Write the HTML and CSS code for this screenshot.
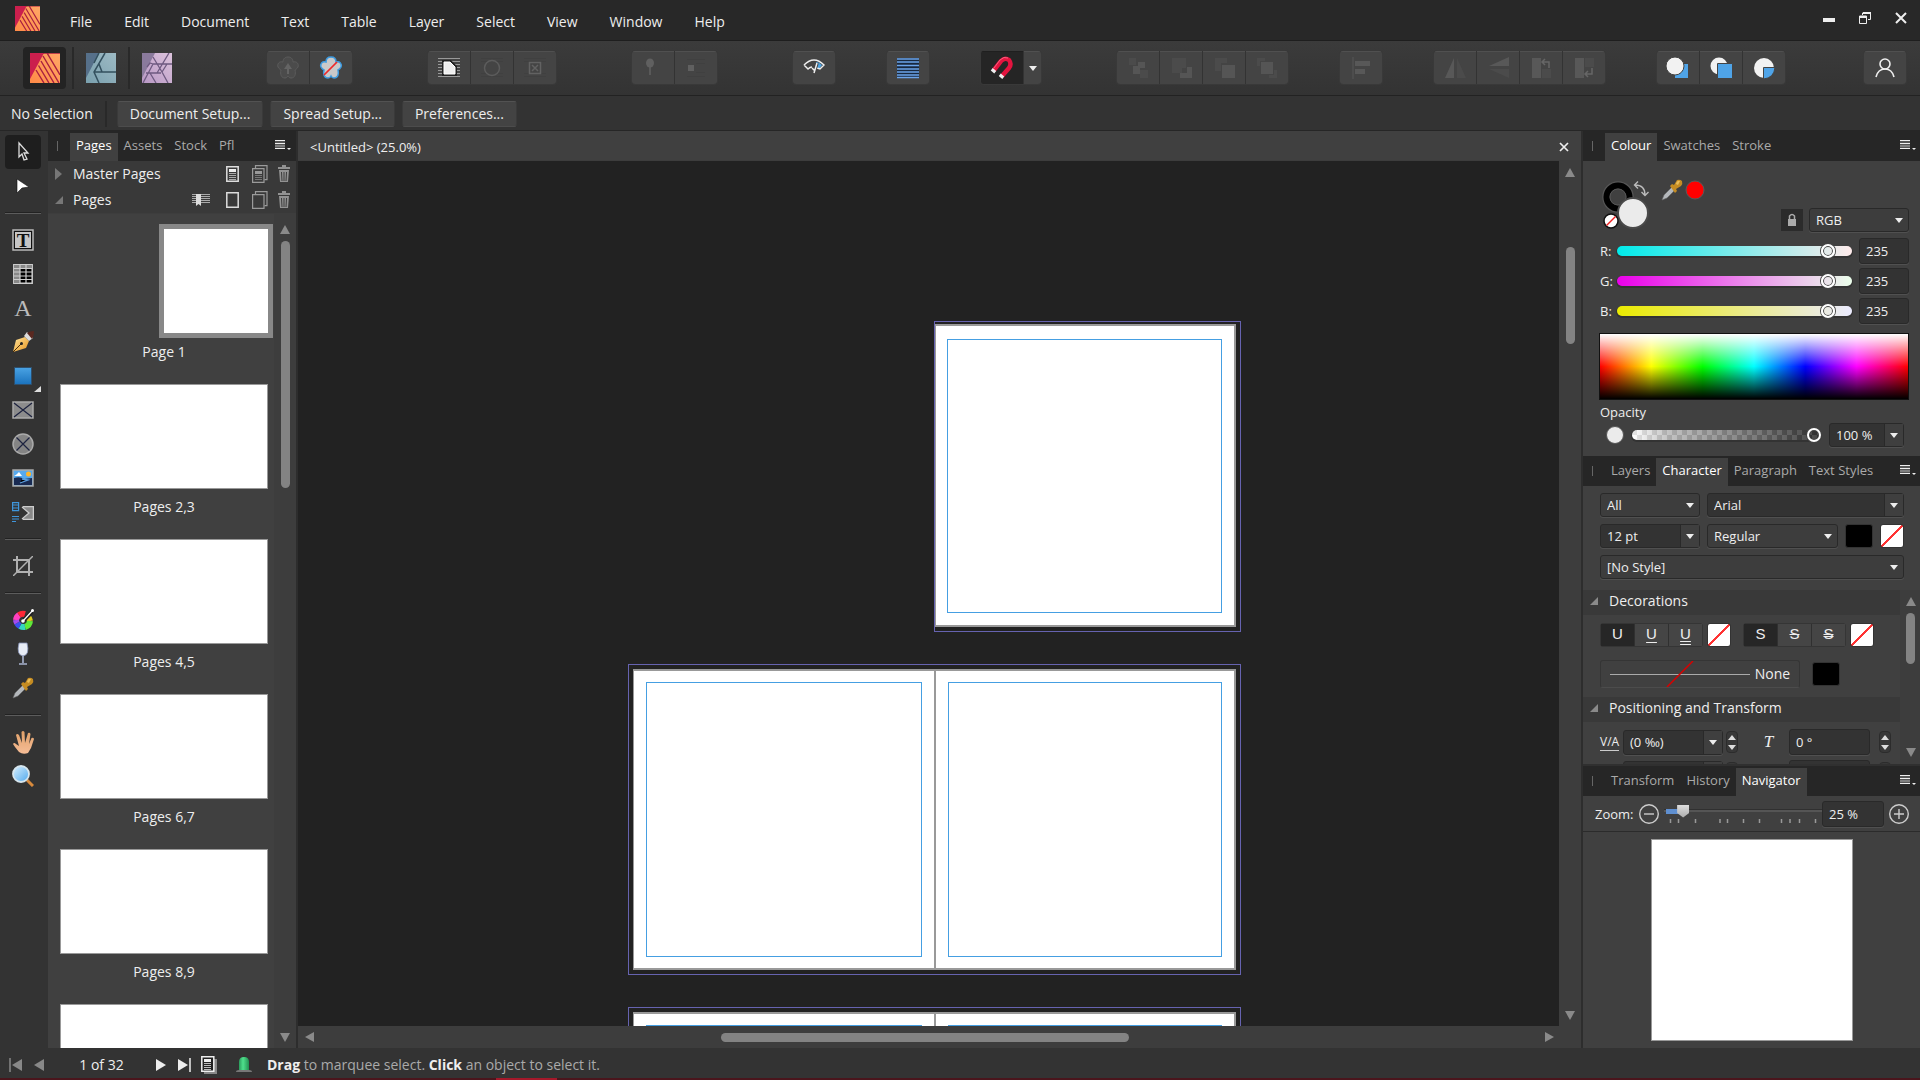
FILE: index.html
```html
<!DOCTYPE html>
<html lang="en">
<head>
<meta charset="utf-8">
<title>Untitled - Publisher</title>
<link rel="stylesheet" href="styles.css">
</head>
<body>
<svg class="defs" aria-hidden="true">
  <defs>
    <linearGradient id="gOrange" x1="0" y1="1" x2="1" y2="0"><stop offset="0" stop-color="#ff8a47"/><stop offset="1" stop-color="#ffa766"/></linearGradient>
    <linearGradient id="gTeal" x1="0" y1="1" x2="1" y2="0"><stop offset="0" stop-color="#7aa0ae"/><stop offset="1" stop-color="#9dbac4"/></linearGradient>
    <linearGradient id="gPurple" x1="0" y1="1" x2="1" y2="0"><stop offset="0" stop-color="#b898c4"/><stop offset="1" stop-color="#dcc3dc"/></linearGradient>
    <linearGradient id="gBlue" x1="0" y1="0" x2="0" y2="1"><stop offset="0" stop-color="#4aa3e4"/><stop offset="1" stop-color="#1a72bd"/></linearGradient>
    <linearGradient id="gGold" x1="0" y1="0" x2="1" y2="1"><stop offset="0" stop-color="#ffe6a0"/><stop offset="1" stop-color="#e8941c"/></linearGradient>
    <linearGradient id="gSkin" x1="0" y1="0" x2="0" y2="1"><stop offset="0" stop-color="#e0a068"/><stop offset="1" stop-color="#f6bd97"/></linearGradient>
    <linearGradient id="gGlass" x1="0" y1="0" x2="1" y2="1"><stop offset="0" stop-color="#d8f0ff"/><stop offset="1" stop-color="#4fa8ec"/></linearGradient>
    <linearGradient id="gBell" x1="0" y1="0" x2="1" y2="0"><stop offset="0" stop-color="#2a9c5c"/><stop offset=".4" stop-color="#4fe08c"/><stop offset="1" stop-color="#239052"/></linearGradient>
  </defs>
  <symbol id="publisher" viewBox="0 0 30 30"><path fill="url(#gOrange)" d="M0 0h30v30H0z"/><path fill="#cb1f4d" d="M0 0h14L0 26z"/><path stroke="#a81f40" stroke-width="1.4" d="M13 3l16 27M11 8l13 22M8.500 12.500L19 30M6 17l8 13M13 0l17 0M17 0l13 22"/></symbol>
  <symbol id="designer" viewBox="0 0 30 30"><path fill="url(#gTeal)" d="M0 0h30v30H0z"/><path fill="#56708a" d="M0 0h13L0 25z"/><path fill="none" stroke="#33505e" stroke-width="1.500" d="M13 0L8 10M19 0L8 19l5 11M8 19h22M13 11l3 8"/></symbol>
  <symbol id="photo" viewBox="0 0 30 30"><path fill="url(#gPurple)" d="M0 0h30v30H0z"/><path fill="#8a7a9c" d="M0 0h13L0 25z"/><path fill="none" stroke="#6e5a80" stroke-width="1.300" d="M11 4l9 15M27 0L15 20M5 14l3-4 3 1M4 20h15M18 11h12M20 19l5-8M11 11L1 30M8 20l6 10M20 19l6 11M11 11h7"/></symbol>
  <symbol id="menu" viewBox="0 0 17 12"><path fill="#555" d="M0 2h10v7H0z"/><path stroke="#eee" d="M0 1.500h10M0 9.500h10M0 4.500h10"/><path stroke="#aaa" d="M0 7h10"/><path fill="#eee" d="M12 9h4l-2 2z"/></symbol>
  <symbol id="trash" viewBox="0 0 12 18"><path fill="#929292" d="M4 0h4v2h4v2H0V2h4zM1 5h10l-1 12H2z"/><path stroke="#3a3a3a" d="M3.500 7l.5 9M6 7v9M8.500 7L8 16"/></symbol>
  <symbol id="dropper" viewBox="0 0 22 22"><path fill="#b4b8bc" stroke="#666" stroke-width=".6" d="M1 21l2-5 8-8 3 3-8 8z"/><path fill="#c58c22" d="M9 7l2-2 2 1 3-5q3-1 5 1 1 3-1 5l-5 3 1 2-2 2z"/><path fill="#e9bd59" d="M15 5q1-4 4-3l-2 4z"/></symbol>
  <symbol id="up" viewBox="0 0 10 10"><path fill="#8a8a8a" d="M5 0l5 9H0z"/></symbol>
  <symbol id="down" viewBox="0 0 10 10"><path fill="#8a8a8a" d="M0 1h10l-5 9z"/></symbol>
  <symbol id="left" viewBox="0 0 10 10"><path fill="#8a8a8a" d="M9 0v10L0 5z"/></symbol>
  <symbol id="right" viewBox="0 0 10 10"><path fill="#8a8a8a" d="M1 0v10l9-5z"/></symbol>
</svg>

<header class="titlebar">
  <svg class="app-logo"><use href="#publisher"/></svg>
  <nav class="menus">
    <button>File</button><button>Edit</button><button>Document</button><button>Text</button><button>Table</button><button>Layer</button><button>Select</button><button>View</button><button>Window</button><button>Help</button>
  </nav>
  <div class="window-buttons">
    <button aria-label="Minimise"><svg width="12" height="12"><path fill="#eee" d="M0 6h12v4H0z"/></svg></button>
    <button aria-label="Restore"><svg width="12" height="12" fill="none" stroke="#eee"><path stroke-width="2" d="M4 1h8M1 5h7"/><path d="M3.500 3V1h8v6.500H9M.5 4v7.500h7V4z"/></svg></button>
    <button aria-label="Close"><svg width="12" height="12"><path stroke="#eee" stroke-width="2" d="M1 1l10 10M11 1L1 11"/></svg></button>
  </div>
</header>

<div class="toolbar">
  <div class="personas">
    <button class="persona on" aria-label="Publisher"><svg width="30" height="30"><use href="#publisher"/></svg></button>
    <button class="persona" aria-label="Designer"><svg width="30" height="30"><use href="#designer"/></svg></button>
    <button class="persona" aria-label="Photo"><svg width="30" height="30"><use href="#photo"/></svg></button>
  </div>
  <div class="group first">
    <button aria-label="Synchronise defaults"><svg width="24" height="24"><path fill="#4b4b4b" stroke="#5c5c5c" d="M12 1c4 0 5 3 5 5 4-1 6 2 5 5-1 2-3 3-3 3 1 4 0 8-4 8-2 0-3-2-3-2s-1 2-3 2c-4 0-5-4-4-8 0 0-2-1-3-3-1-3 1-6 5-5 0-2 1-5 5-5z"/><path fill="#646464" d="M12 7l4 6h-3v5h-2v-5H8z"/></svg></button>
    <button aria-label="Revert defaults"><svg width="24" height="24"><path fill="#c9c9c9" stroke="#3d9be0" stroke-width="1.500" d="M12 1c4 0 5 3 5 5 4-1 6 2 5 5-1 2-3 3-3 3 1 4 0 8-4 8-2 0-3-2-3-2s-1 2-3 2c-4 0-5-4-4-8 0 0-2-1-3-3-1-3 1-6 5-5 0-2 1-5 5-5z"/><path stroke="#f02828" stroke-width="1.700" d="M5 19L18 6"/></svg></button>
  </div>
  <div class="group wide">
    <button aria-label="Show wrap outline"><svg width="24" height="24"><path stroke="#999" stroke-width="1" d="M1 2.500h22M1 5.500h22M1 8.500h22M1 11.500h22M1 14.500h22M1 17.500h22M1 20.500h22"/><path fill="#eee" stroke="#222" stroke-width="4" d="M7 6h6l5 5v7H7z"/><path fill="#eee" stroke="#fff" d="M7 6h6l5 5v7H7z"/></svg></button>
    <button aria-label="Wrap"><svg width="24" height="24" fill="none"><path stroke="#404040" d="M1 2.500h22M1 5.500h22M1 17.500h22M1 20.500h22"/><ellipse cx="12" cy="12" rx="7.500" ry="7.500" fill="#444" stroke="#5c5c5c" stroke-width="1.500"/></svg></button>
    <button aria-label="No wrap"><svg width="24" height="24"><path stroke="#404040" d="M1 2.500h22M1 5.500h22M1 17.500h22M1 20.500h22"/><path fill="#444" stroke="#626262" stroke-width="1.500" d="M6.500 6.500h11v11h-11zM9 9l6 6M15 9l-6 6"/></svg></button>
  </div>
  <div class="group wide">
    <button aria-label="Pin to text"><svg width="24" height="24"><ellipse cx="9" cy="7" rx="4" ry="4.500" fill="#606060"/><path stroke="#606060" stroke-width="1.500" d="M9 10v9"/></svg></button>
    <button aria-label="Pin inline"><svg width="24" height="24"><path fill="#606060" d="M4 9h6v6H4z"/><path stroke="#404040" d="M3 3.500h18M12 7.500h9M12 16.500h9M3 20.500h18"/></svg></button>
  </div>
  <div class="group wide">
    <button aria-label="Preview mode"><svg width="22" height="20" fill="none" stroke="#eee" stroke-width="1.500"><path fill="#4aa3e4" stroke="none" d="M13 4q3 0 6 3l-3 4q-2-1-3-1z"/><path d="M1 7q10-10 20 0l-4 4-3-1M9 9q-2 0-4 2L1 7"/><path stroke="#444" stroke-width="3.500" d="M11 15l3-10"/><path d="M11 15l3-10M9 10l3 3"/></svg></button>
  </div>
  <div class="group">
    <button aria-label="Baseline grid"><svg width="22" height="22"><path fill="#18283e" d="M0 1h22v20H0z"/><path stroke="#6ba4ea" stroke-width="1.400" d="M0 2h22M0 5h22M0 8.500h22M0 12h22M0 15h22M0 18h22M0 20.500h22"/></svg></button>
  </div>
  <div class="group">
    <button class="on" aria-label="Snapping"><svg width="24" height="24" fill="none"><path stroke="#e3143f" stroke-width="4.500" d="M4 14l7-9q4-4 8-1 3 4 0 8l-7 8"/><path stroke="#f76080" d="M4 12l6-8q4-4 8-2"/><path stroke="#eee" stroke-width="4.500" d="M4.500 13.500l-2 2.500M12.500 19l-2 2.500"/></svg></button>
    <button class="narrow" aria-label="Snapping options"><svg width="8" height="5"><path fill="#eee" d="M0 0h8L4 5z"/></svg></button>
  </div>
  <div class="group wide dim">
    <button aria-label="Back"><svg width="24" height="24"><path fill="#4b4b4b" d="M3 2h7v7H3zM14 14h8v8h-8z"/><path fill="#555" d="M12 6h7v6h-5v6H7v-8h5z"/></svg></button>
    <button aria-label="Back one"><svg width="24" height="24"><path fill="#4b4b4b" d="M3 2h14v10h-4v5H3z"/><path fill="#555" d="M18 11h5v11H11v-5h7z"/></svg></button>
    <button aria-label="Forward one"><svg width="24" height="24"><path fill="#4b4b4b" d="M3 2h12v5H9v8H3z"/><path fill="#555" d="M10 9h13v13H10z"/></svg></button>
    <button aria-label="Front"><svg width="24" height="24"><path fill="#4b4b4b" d="M2 2h8v3H5v5H2zM19 14h3v8h-8v-3h5z"/><path fill="#555" d="M6 6h12v12H6z"/></svg></button>
  </div>
  <div class="group">
    <button aria-label="Alignment"><svg width="24" height="24"><path fill="#4d4d4d" d="M3 1h2v22H3z"/><path fill="#585858" d="M6 5h15v5H6zM6 13h10v5H6z"/></svg></button>
  </div>
  <div class="group">
    <button aria-label="Flip horizontal"><svg width="24" height="24"><path fill="#585858" d="M11 2v20H2z"/><path fill="#4b4b4b" d="M14 2v20h9z"/></svg></button>
    <button aria-label="Flip vertical"><svg width="24" height="24"><path fill="#585858" d="M3 10h20V1z"/><path fill="#4b4b4b" d="M3 13h20v9z"/></svg></button>
    <button aria-label="Rotate left"><svg width="24" height="24"><path fill="#585858" d="M3 2h9v20H3z"/><path fill="#4b4b4b" d="M13 13h9v9h-9z"/><path fill="none" stroke="#666" stroke-width="1.500" d="M20 12V6h-6M16 3l-3 3 3 3"/></svg></button>
    <button aria-label="Rotate right"><svg width="24" height="24"><path fill="#585858" d="M3 2h9v20H3z"/><path fill="#4b4b4b" d="M13 2h9v9h-9z"/><path fill="none" stroke="#666" stroke-width="1.500" d="M20 12v6h-6M16 15l-3 3 3 3"/></svg></button>
  </div>
  <div class="group">
    <button aria-label="Insert behind"><svg width="24" height="24"><path fill="#4fa4e8" d="M9 8h13v14H9z"/><circle cx="9" cy="10" r="9" fill="#f2f2f2" stroke="#444"/></svg></button>
    <button aria-label="Insert on top"><svg width="24" height="24"><circle cx="10" cy="10" r="8.500" fill="#f2f2f2"/><path fill="#4fa4e8" stroke="#444" d="M8.500 7.500h15v15h-15z"/></svg></button>
    <button aria-label="Insert inside"><svg width="24" height="24"><circle cx="12" cy="12" r="10" fill="#f2f2f2"/><path fill="#4fa4e8" stroke="#444" d="M11.500 23V11.500H23Q22 22 11.500 23z"/></svg></button>
  </div>
  <div class="group account">
    <button aria-label="Account"><svg width="22" height="22" fill="none" stroke="#eee" stroke-width="1.600"><circle cx="11" cy="7" r="5"/><path d="M2 20q2-8 9-8t9 8"/></svg></button>
  </div>
</div>

<div class="context">
  <span class="selection">No Selection</span>
  <button>Document Setup...</button><button>Spread Setup...</button><button>Preferences...</button>
</div>

<main class="work">
  <aside class="tools">
    <button class="on" aria-label="Move"><svg width="24" height="24"><path fill="#222" stroke="#ddd" stroke-width="1.300" d="M8 3l9 10h-4l3 6-3 1-2-6-3 3z"/></svg></button>
    <button aria-label="Node"><svg width="24" height="24"><path fill="#fff" stroke="#111" stroke-width=".6" d="M6 5l12 8-7 1-5 5z"/></svg></button>
    <hr>
    <button aria-label="Frame text"><svg class="framed" width="22" height="22"><path fill="#111" stroke="#bbb" stroke-width="1.500" d="M1 1h20v20H1z"/><path fill="#c6c6c6" d="M3 3h16v16H3z"/><text x="11" y="18" text-anchor="middle" class="frame-t">T</text></svg></button>
    <button aria-label="Table"><svg width="20" height="20"><path fill="#000" stroke="#ccc" stroke-width="1.500" d="M.8.8h18.400v18.400H.8z"/><path fill="#888" d="M1 1h18v3H1zM1 1h6v18H1z"/><path stroke="#ccc" stroke-width="1.200" d="M1 4.500h18M1 8h18M1 12h18M1 15.500h18M7 1v18M13 1v18"/></svg></button>
    <button aria-label="Artistic text"><span class="glyph-a">A</span></button>
    <button aria-label="Pen"><svg width="24" height="24"><path fill="url(#gGold)" d="M2 22l3-12 9-3 4 4-3 7z"/><path stroke="#4a2c08" d="M2 22l8-8"/><circle cx="10.500" cy="13.500" r="1.500" fill="#222"/><path fill="#ddd" d="M13 6l3-4 6 6-4 3z"/><path fill="#5a2820" d="M16 3q3-2 7-2 0 5-2 8z"/></svg></button>
    <button class="flyout" aria-label="Rectangle"><svg width="20" height="20"><path fill="url(#gBlue)" stroke="#2f4f6c" d="M1.500 1.500h17v17h-17z"/></svg></button>
    <button aria-label="Picture frame rectangle"><svg width="22" height="18"><path fill="#8c8c8c" stroke="#aaa" stroke-width="1.500" d="M1 1h20v16H1z"/><path stroke="#1d2340" stroke-width="1.200" d="M2 2l18 14M20 2L2 16"/></svg></button>
    <button aria-label="Picture frame ellipse"><svg width="22" height="22"><circle cx="11" cy="11" r="10" fill="#848484" stroke="#aaa" stroke-width="1.500"/><path stroke="#1d2340" stroke-width="1.200" d="M4.500 4.500l13 13M17.500 4.500l-13 13"/></svg></button>
    <button aria-label="Place image"><svg width="22" height="18"><path fill="#56a9ee" stroke="#aaa" stroke-width="1.500" d="M1 1h20v16H1z"/><path fill="#fff" d="M2 7q2-1 3-2t2-2l3 4z"/><circle cx="16.500" cy="5" r="2.500" fill="#ffb52a"/><path fill="#182a52" d="M2 9q6-2 10 1l8-1v7H2z"/><path stroke="#5b9fe0" stroke-width="1.300" d="M10 10l6 1-8 3"/></svg></button>
    <button aria-label="Data merge"><svg width="22" height="20"><path fill="none" stroke="#3f96dc" stroke-width="1.200" d="M.6.6h6v8h-6zM1 3h5M1 6h5M0 14.500h7M0 17h7M0 19.500h4"/><path fill="#888" d="M10 4h12v14H10l7-7z"/><path fill="none" stroke="#ccc" stroke-width="1.300" d="M22 4.700H11M22 17.300H11M10 5l7 6-7 6M21.400 4v14"/></svg></button>
    <hr>
    <button aria-label="Crop"><svg width="20" height="20" fill="none" stroke="#b0b0b0" stroke-width="2"><path d="M4 0v16h16M0 4h16v16"/><path stroke-width="1.500" d="M0 20L20 0"/></svg></button>
    <hr>
    <button aria-label="Fill"><svg width="24" height="24" fill="none" stroke-width="6"><path stroke="#ff40c0" d="M5 12A7 7 0 0 1 8 7"/><path stroke="#ff2836" d="M8 7a7 7 0 0 1 6-1"/><path stroke="#dccb20" d="M17 9a7 7 0 0 1 2 4"/><path stroke="#60e838" d="M19 13a7 7 0 0 1-5 6"/><path stroke="#34d6c0" d="M14 19a7 7 0 0 1-5-1"/><path stroke="#3a50ee" d="M9 18a7 7 0 0 1-3-3"/><path stroke="#a34cf0" d="M6 15a7 7 0 0 1-1-3"/><path stroke="#222" stroke-width="4" d="M12 13l9-9"/><path stroke="#fff" stroke-width="1.200" d="M12 13L22 2"/><circle cx="12" cy="13" r="1.800" fill="#fff"/><circle cx="21.500" cy="2.500" r="1.500" fill="#fff"/></svg></button>
    <button aria-label="Transparency"><svg width="16" height="24"><path fill="#e8edf6" stroke="#8592b6" stroke-width=".8" d="M4 1h8q3 12-4 13Q1 13 4 1z"/><path fill="none" stroke="#a9b4d0" stroke-width="1.600" d="M8 14v7M4 22h8"/></svg></button>
    <button aria-label="Colour picker"><svg width="22" height="22"><use href="#dropper"/></svg></button>
    <hr>
    <button aria-label="View"><svg width="22" height="24"><path fill="url(#gSkin)" d="M7 22L3 17 1 14q1-2 3 0l3 2L4 5q1-2 3 0l3 8L9.500 2q1.500-2 3 0l.5 11L16 3q2-1 2.500 1L17 14l2.500-6q2-1 2.500 1l-3 9-3 5q-5 2-9-1z"/></svg></button>
    <button aria-label="Zoom"><svg width="22" height="22"><path stroke="#d88a3c" stroke-width="3" d="M15 15l6 6"/><circle cx="9" cy="9" r="8" fill="url(#gGlass)" stroke="#d7e6ee" stroke-width="1.800"/></svg></button>
  </aside>

  <section class="pages panel">
    <div class="tabs"><button class="on">Pages</button><button>Assets</button><button>Stock</button><button>Pfl</button><button class="tab-menu" aria-label="Panel menu"><svg width="17" height="12"><use href="#menu"/></svg></button></div>
    <div class="tree">
      <div class="tree-row"><svg width="7" height="12"><path fill="#777" d="M0 0l7 6-7 6z"/></svg><span>Master Pages</span>
        <button aria-label="Add master"><svg width="13" height="16"><path fill="#3a3a3a" stroke="#ddd" stroke-width="1.500" d="M.8.8h11.400v14.400H.8z"/><path fill="#eee" d="M3 3h7v3H3z"/><path stroke="#aaa" d="M3 7.500h7M3 9.500h7M3 11.500h7M3 13.500h7"/></svg></button>
        <button class="dup" aria-label="Duplicate master"><svg width="16" height="18"><path fill="none" stroke="#9a9a9a" stroke-width="1.200" d="M3.500 3V.6h11.500v14h-2.500"/><path fill="#3a3a3a" stroke="#9a9a9a" stroke-width="1.200" d="M.6 3.600h11.400v13.800H.6z"/><path fill="#999" d="M3 6h7v3H3z"/><path stroke="#777" d="M3 10.500h7M3 12.500h7M3 14.500h7"/></svg></button>
        <button aria-label="Delete master"><svg width="12" height="18"><use href="#trash"/></svg></button></div>
      <div class="tree-row"><svg width="8" height="8"><path fill="#777" d="M8 0v8H0z"/></svg><span>Pages</span>
        <button class="marker" aria-label="Sections"><svg width="18" height="14"><path stroke="#aaa" d="M0 1.500h18M0 3.500h18M0 5.500h18M0 7.500h18M0 9.500h18"/><path fill="#ddd" d="M4 1h5v12l-2.500-2L4 13z"/></svg></button>
        <button aria-label="Add page"><svg width="13" height="16"><path fill="#3a3a3a" stroke="#ddd" stroke-width="1.500" d="M.8.8h11.400v14.400H.8z"/></svg></button>
        <button class="dup" aria-label="Duplicate page"><svg width="16" height="18"><path fill="none" stroke="#9a9a9a" stroke-width="1.200" d="M3.500 3V.6h11.500v14h-2.500"/><path fill="#3a3a3a" stroke="#9a9a9a" stroke-width="1.200" d="M.6 3.600h11.400v13.800H.6z"/></svg></button>
        <button aria-label="Delete page"><svg width="12" height="18"><use href="#trash"/></svg></button></div>
    </div>
    <div class="thumbs">
      <div class="thumb-list">
        <figure class="single"><div class="thumb"></div><figcaption>Page 1</figcaption></figure>
        <figure><div class="thumb"></div><figcaption>Pages 2,3</figcaption></figure>
        <figure><div class="thumb"></div><figcaption>Pages 4,5</figcaption></figure>
        <figure><div class="thumb"></div><figcaption>Pages 6,7</figcaption></figure>
        <figure><div class="thumb"></div><figcaption>Pages 8,9</figcaption></figure>
        <figure><div class="thumb"></div></figure>
      </div>
      <div class="vbar"><svg width="10" height="10"><use href="#up"/></svg><div class="rail"><div class="bar bar-pages"></div></div><svg width="10" height="10"><use href="#down"/></svg></div>
    </div>
  </section>

  <section class="document">
    <div class="doc-tab"><span>&lt;Untitled&gt; (25.0%)</span><button aria-label="Close document"><svg width="10" height="10"><path stroke="#eee" stroke-width="1.700" d="M1 1l8 8M9 1L1 9"/></svg></button></div>
    <div class="stage">
      <div class="canvas">
        <div class="spread solo"><div class="page"><div class="margins"></div></div></div>
        <div class="spread second"><div class="page"><div class="margins"></div></div><div class="page"><div class="margins"></div></div></div>
        <div class="spread third"><div class="page"><div class="margins"></div></div><div class="page"><div class="margins"></div></div></div>
      </div>
      <div class="vbar"><svg width="10" height="10"><use href="#up"/></svg><div class="rail"><div class="bar bar-doc"></div></div><svg width="10" height="10"><use href="#down"/></svg></div>
      <div class="hbar"><svg width="10" height="10"><use href="#left"/></svg><div class="rail"><div class="bar bar-h"></div></div><svg width="10" height="10"><use href="#right"/></svg></div>
    </div>
  </section>

  <aside class="studio">
    <section class="panel">
      <div class="tabs"><button class="on">Colour</button><button>Swatches</button><button>Stroke</button><button class="tab-menu" aria-label="Panel menu"><svg width="17" height="12"><use href="#menu"/></svg></button></div>
      <div class="colour">
        <div class="wells">
          <svg class="well-art" width="110" height="54" fill="none">
            <circle cx="18" cy="19" r="15" stroke="#555" stroke-width="1.500"/><circle cx="18" cy="19" r="11.500" stroke="#000" stroke-width="6"/><circle cx="18" cy="19" r="8" stroke="#555"/>
            <circle cx="33" cy="35" r="15" fill="#ebebeb" stroke="#4a4a4a" stroke-width="2"/>
            <circle cx="11" cy="43" r="7" fill="#fff" stroke="#111" stroke-width="1.500"/><path stroke="#f02020" stroke-width="1.500" d="M6.500 47.500l9-9"/>
            <path stroke="#bbb" stroke-width="1.400" d="M35 7q10 0 10 10M38 3.500L34.500 7l3.500 3.500M41.500 14L45 17.500l3.500-3.500"/>
            <use href="#dropper" x="61" y="1" width="22" height="22"/>
            <circle cx="95" cy="12" r="9" fill="#f00" stroke="#5a5a5a"/>
          </svg>
          <button class="lock" aria-label="Lock colour"><svg width="10" height="14"><path fill="#aaa" d="M1 6h8v7H1z"/><path fill="none" stroke="#aaa" stroke-width="1.500" d="M2.500 6V3q2.500-3 5 0v3"/></svg></button>
          <div class="pick mode"><select aria-label="Colour model"><option>RGB</option></select></div>
        </div>
        <div class="channel"><label for="r">R:</label><input class="slide red" id="r" type="range" min="0" max="255" value="235"><input class="field" aria-label="Red" value="235"></div>
        <div class="channel"><label for="g">G:</label><input class="slide green" id="g" type="range" min="0" max="255" value="235"><input class="field" aria-label="Green" value="235"></div>
        <div class="channel"><label for="b">B:</label><input class="slide blue" id="b" type="range" min="0" max="255" value="235"><input class="field" aria-label="Blue" value="235"></div>
        <div class="spectrum"></div>
        <label class="opacity-label" for="op">Opacity</label>
        <div class="opacity"><i class="dot"></i><input class="slide alpha" id="op" type="range" value="100"><div class="combo percent"><input aria-label="Opacity value" value="100 %"><button aria-label="Open"></button></div></div>
      </div>
    </section>

    <section class="panel character">
      <div class="tabs"><button>Layers</button><button class="on">Character</button><button>Paragraph</button><button>Text Styles</button><button class="tab-menu" aria-label="Panel menu"><svg width="17" height="12"><use href="#menu"/></svg></button></div>
      <div class="fonts">
        <div class="line"><div class="pick w100"><select aria-label="Font filter"><option>All</option></select></div><div class="combo grow"><input aria-label="Font family" value="Arial"><button aria-label="Open"></button></div></div>
        <div class="line"><div class="combo w100"><input aria-label="Font size" value="12 pt"><button aria-label="Open"></button></div><div class="pick grow"><select aria-label="Font style"><option>Regular</option></select></div><button class="swatch black" aria-label="Text colour"></button><button class="swatch none" aria-label="Highlight colour"></button></div>
        <div class="line"><div class="pick grow"><select aria-label="Character style"><option>[No Style]</option></select></div></div>
      </div>
      <div class="scroller">
        <div class="sections">
          <h2><svg width="8" height="8"><path fill="#8a8a8a" d="M8 0v8H0z"/></svg>Decorations</h2>
          <div class="deco">
            <div class="triple"><button class="on">U</button><button class="under">U</button><button class="under2">U</button></div><button class="swatch none" aria-label="Underline colour"></button>
            <div class="triple last"><button class="on">S</button><button class="strike">S</button><button class="strike2">S</button></div><button class="swatch none" aria-label="Strikethrough colour"></button>
          </div>
          <div class="outline"><button class="stroke-box"><svg width="140" height="26"><path stroke="#aaa" d="M0 13.500h140"/><path stroke="#d80000" stroke-width="1.500" d="M57 26L83 0"/></svg>None</button><button class="swatch black" aria-label="Stroke colour"></button></div>
          <h2><svg width="8" height="8"><path fill="#8a8a8a" d="M8 0v8H0z"/></svg>Positioning and Transform</h2>
          <div class="position">
            <span class="tracking">V/A</span>
            <div class="combo w100"><input aria-label="Tracking" value="(0 ‰)"><button aria-label="Open"></button></div><button class="spin" aria-label="Step tracking"></button>
            <span class="shear">T</span><input class="field deg" aria-label="Shear" value="0 °"><button class="spin far" aria-label="Step shear"></button>
          </div>
          <div class="position next"><i></i><div class="combo w100"><input aria-label="Kerning"><button aria-label="Open"></button></div><button class="spin" aria-label="Step kerning"></button><span class="shear"></span><input class="field deg" aria-label="Scale"><button class="spin far" aria-label="Step scale"></button></div>
        </div>
        <div class="vbar"><svg width="10" height="10"><use href="#up"/></svg><div class="rail"><div class="bar bar-char"></div></div><svg width="10" height="10"><use href="#down"/></svg></div>
      </div>
    </section>

    <section class="panel navigator">
      <div class="tabs"><button>Transform</button><button>History</button><button class="on">Navigator</button><button class="tab-menu" aria-label="Panel menu"><svg width="17" height="12"><use href="#menu"/></svg></button></div>
      <div class="zoom-row"><label for="zoom">Zoom:</label><button class="round" aria-label="Zoom out"><svg width="20" height="20" fill="none" stroke="#ccc" stroke-width="1.400"><circle cx="10" cy="10" r="9.300"/><path d="M5 10h10"/></svg></button>
        <div class="zoom-slide"><input id="zoom" type="range" value="9"><svg width="158" height="4"><path stroke="#999" stroke-width="1.500" d="M6.500 0v4M14.500 0v4M31.500 0v4M56 0v4M63.500 0v4M79.500 0v4M95.500 0v4M117.500 0v4M126 0v4M135.500 0v4M151.500 0v4"/></svg></div>
        <input class="field zoom-field" aria-label="Zoom value" value="25 %"><button class="round" aria-label="Zoom in"><svg width="20" height="20" fill="none" stroke="#ccc" stroke-width="1.400"><circle cx="10" cy="10" r="9.300"/><path d="M5 10h10M10 5v10"/></svg></button></div>
      <div class="preview"><div class="preview-page"></div></div>
    </section>
  </aside>
</main>

<footer class="status">
  <button aria-label="First page"><svg width="14" height="14"><path stroke="#888" stroke-width="1.500" d="M1 0v14"/><path fill="#888" d="M13 1v12L3 7z"/></svg></button>
  <button aria-label="Previous page"><svg width="12" height="14"><path fill="#888" d="M11 1v12L1 7z"/></svg></button>
  <button class="count">1 of 32</button>
  <button aria-label="Next page"><svg width="12" height="14"><path fill="#eee" d="M1 1v12l10-6z"/></svg></button>
  <button aria-label="Last page"><svg width="14" height="14"><path stroke="#eee" stroke-width="1.500" d="M13 0v14"/><path fill="#eee" d="M1 1v12l10-6z"/></svg></button>
  <button aria-label="Page list"><svg width="16" height="18"><path fill="#888" d="M3 3h13v15H3z"/><path fill="#222" stroke="#eee" stroke-width="1.500" d="M.8.800h12v14.500H.8z"/><path fill="#eee" d="M3 3h7v3H3z"/><path stroke="#bbb" d="M3 7.500h7M3 9.500h7M3 11.500h7M3 13.500h7"/></svg></button>
  <button class="bell" aria-label="Preflight"><svg width="16" height="16"><path fill="url(#gBell)" d="M3 13V5q0-5 5-5t5 5v8z"/><path fill="#777" d="M0 15q0-2 3-2h10q3 0 3 2z"/></svg></button>
  <p><b>Drag</b> to marquee select. <b>Click</b> an object to select it.</p>
</footer>
<div class="taskbar"><i></i></div>
</body>
</html>
```
FILE: styles.css
```css
* { box-sizing: border-box; }
body {
  margin: 0;
  height: 100vh;
  overflow: hidden;
  display: grid;
  grid-template-rows: 41px 55px 35px minmax(0, 1fr) 30px 2px;
  background: #333;
  color: #eee;
  font: 14px/20px "Open Sans", "Noto Sans", sans-serif;
}
button, input, select { font: inherit; color: inherit; }
button { padding: 0; border: 0; background: none; display: flex; align-items: center; justify-content: center; }
svg { display: block; flex: none; }
hr, figure, h2, p { margin: 0; }
.defs { position: absolute; width: 0; height: 0; }

/* title bar */
.titlebar { display: flex; align-items: center; background: #282828; border-bottom: 1px solid #1e1e1e; padding: 0 13px 0 15px; }
.app-logo { width: 25px; height: 25px; margin-bottom: 3px; }
.menus { display: flex; gap: 32px; margin: 3px auto 0 30px; }
.window-buttons { display: flex; gap: 24px; margin-bottom: 4px; }

/* toolbar */
.toolbar { display: flex; align-items: flex-start; background: linear-gradient(#3b3b3b, #333); border-bottom: 1px solid #222; padding: 0 14px 0 23px; }
.personas { display: flex; padding-top: 6px; }
.persona { width: 43px; height: 42px; border-radius: 4px; }
.persona.on { background: #232323; }
.persona + .persona { width: 56px; border-left: 2px solid #292929; border-radius: 0; }
.persona.on + .persona { margin-left: 6px; }
.group { display: flex; gap: 1px; margin: 10px 0 0 52px; background: #333; border-radius: 3px; overflow: hidden; box-shadow: 0 0 0 1px #393939; }
.group.first { margin-left: 83px; }
.group.wide { margin-left: 76px; }
.group.account { margin-left: auto; }
.group button { width: 42px; height: 33px; background: #444; border-top: 1px solid #505050; }
.group button.on { background: #252525; border-top-color: #1f1f1f; }
.group .narrow { width: 17px; }

/* context bar */
.context { display: flex; align-items: center; gap: 7px; padding: 1px 11px 0; border-bottom: 1px solid #262626; }
.context .selection { padding-right: 12px; margin-right: 3px; line-height: 26px; border-right: 2px solid #292929; }
.context button { height: 26px; padding: 0 12px; background: #434343; border: 1px solid #3a3a3a; border-top-color: #525252; border-bottom-color: #4c4c4c; border-radius: 3px; }

.work { display: grid; grid-template-columns: 48px 248px minmax(0, 1fr) 337px; min-height: 0; }

/* tools */
.tools { padding: 4px 0 0 5px; }
.tools button { width: 36px; height: 34px; }
.tools button.on { background: #1e1e1e; border-radius: 4px; }
.tools hr { height: 2px; width: 36px; margin: 9px 0; border: 0; border-top: 1px solid #222; border-bottom: 1px solid #5c5c5c; }
.glyph-a { font: 24px/34px "Liberation Serif", serif; color: #bbb; }
.frame-t { font: bold 19px "Liberation Serif", serif; fill: #111; }
.flyout { position: relative; }
.flyout::after { content: ""; position: absolute; right: 0; bottom: 1px; border-left: 7px solid transparent; border-bottom: 6px solid #ddd; }

/* panels */
.panel { background: #404040; display: flex; flex-direction: column; min-height: 0; }
.tabs { display: flex; flex: none; height: 30px; padding: 2px 4px 0 22px; background: #262626; font-size: 13px; position: relative; }
.tabs::before { content: ""; position: absolute; left: 9px; top: 10px; width: 1px; height: 10px; background: #666; }
.tabs button { color: #aaa; padding: 0 6px 4px; }
.tabs button.on { background: #404040; color: #fff; }
.tabs .tab-menu { margin-left: auto; padding: 0 0 4px; }

.tree { background: #393939; border-bottom: 1px solid #3d3d3d; padding-left: 7px; }
.tree-row { display: flex; align-items: center; height: 26px; padding-right: 6px; }
.tree-row > svg { width: 8px; margin-right: 10px; }
.tree-row span { margin-right: auto; }
.tree-row .dup { margin: 0 10px 0 13px; }
.tree-row .marker { margin-right: 16px; }

.thumbs { display: flex; flex: 1; min-height: 0; }
.thumb-list { flex: 1; padding: 15px 6px 0 12px; overflow: hidden; }
.thumb-list figure { height: 155px; display: flex; flex-direction: column; }
.thumb { height: 105px; background: #fff; border: 1px solid #999; flex: none; }
.single .thumb { width: 104px; height: 104px; align-self: flex-end; margin-bottom: 1px; border: 0; outline: 5px solid #888; }
.thumb-list figcaption { text-align: center; padding-top: 8px; }
.vbar { width: 23px; background: #3d3d3d; display: flex; flex-direction: column; align-items: center; padding: 8px 0 6px; }
.vbar .rail { flex: 1; padding: 9px 0; }
.bar { background: #838383; border-radius: 5px; }
.vbar .bar { width: 9px; }
.thumbs .vbar { width: 22px; padding-top: 11px; }
.thumbs .rail { padding: 6px 0; }
.bar-pages { height: 247px; }

/* document */
.document { display: flex; flex-direction: column; border: solid #2d2d2d; border-width: 0 2px; min-width: 0; min-height: 0; }
.doc-tab { display: flex; justify-content: space-between; align-items: center; height: 29px; background: #404040; padding: 2px 12px 0; font-size: 13px; flex: none; }
.stage { flex: 1; min-height: 0; display: grid; grid-template: minmax(0, 1fr) 22px / minmax(0, 1fr) 22px; background: #3d3d3d; }
.canvas { background: #222; position: relative; overflow: hidden; margin-top: 1px; }
.spread { position: absolute; left: calc(50% - 301px); width: 613px; height: 311px; padding: 4px; display: flex; border: 1px solid #6663b0; }
.spread.solo { top: 160px; left: calc(50% + 5px); width: 307px; padding: 2px 4px 4px 0; }
.spread.second { top: 503px; }
.spread.third { top: 846px; }
.page { flex: 1; background: #fff; border: 2px solid #999; border-left-width: 1px; padding: 11px 12px; display: flex; }
.page:first-child:not(:last-child) { flex: 0 0 302px; border-right-width: 1px; }
.solo .page { padding: 13px 12px 12px 11px; }
.margins { flex: 1; border: 1px solid #459fe2; }
.stage .vbar { width: auto; padding: 8px 0 6px; }
.stage .vbar .rail { padding-top: 69px; }
.bar-doc { height: 97px; }
.hbar { display: flex; align-items: center; padding: 0 5px 0 7px; }
.hbar .rail { flex: 1; padding-right: 10px; }
.bar-h { width: 408px; height: 9px; margin: 0 auto; }

/* studio */
.studio { display: grid; grid-template-rows: auto 310px minmax(0, 1fr); min-height: 0; font-size: 13px; }
.colour { padding: 17px 12px 8px 17px; }
.wells { display: flex; align-items: flex-end; height: 54px; margin-bottom: 4px; }
.well-art { margin-right: auto; }
.lock { width: 22px; height: 22px; background: #2b2b2b; margin: 0 6px 1px 0; }
.mode { width: 100px; }
.pick { position: relative; height: 24px; display: flex; }
.pick select { appearance: none; width: 100%; background: #3d3d3d; border: 1px solid #292929; border-radius: 3px; padding: 0 6px; box-shadow: 0 1px #505050; }
.pick::after, .combo button::after { content: ""; border: 4px solid transparent; border-top: 5px solid #eee; border-bottom: 0; }
.pick::after { position: absolute; right: 6px; top: 10px; }
.channel { display: flex; align-items: center; height: 30px; }
.channel label { width: 17px; }
.field { width: 50px; height: 26px; background: #333; border: 1px solid #292929; border-radius: 3px; padding: 0 6px; box-shadow: 0 1px #505050; }
.channel .field { margin-left: 7px; }
.slide { appearance: none; flex: 1; min-width: 0; height: 10px; margin: 0; border-radius: 5px; box-shadow: 0 1px 0 1px #333; }
.slide::-webkit-slider-thumb { appearance: none; width: 14px; height: 14px; border-radius: 50%; border: 2px solid #fff; background: transparent; box-shadow: 0 0 0 1px #444, inset 0 0 0 1px #444; }
.red { background: linear-gradient(90deg, #00ebeb, #ffebeb); }
.green { background: linear-gradient(90deg, #eb00eb, #ebffeb); }
.blue { background: linear-gradient(90deg, #ebeb00, #ebebff); }
.alpha { background: repeating-conic-gradient(#ffffff18 0 25%, #00000018 0 50%) 0 0 / 10px 10px, linear-gradient(90deg, #fff, #bbb 20%, #333); }
.spectrum { height: 67px; margin: 7px 0 2px -1px; border: 1px solid #111; background: linear-gradient(#fff, transparent 50%, #000), linear-gradient(90deg, red, #ff0, lime, aqua, blue, #f0f, red); }
.opacity-label { display: block; }
.opacity { display: flex; align-items: center; height: 26px; padding-right: 5px; }
.dot { width: 18px; height: 18px; margin: 0 8px 0 6px; border-radius: 50%; background: #ebebeb; border: 1px solid #555; }
.combo { display: flex; height: 24px; background: #333; border: 1px solid #292929; border-radius: 3px; box-shadow: 0 1px #505050; }
.combo input { flex: 1; width: 0; min-width: 0; border: 0; background: none; padding: 0 6px; }
.combo button { width: 19px; background: #3f3f3f; border-left: 1px solid #292929; }
.percent { width: 75px; margin-left: 8px; }
.w100 { width: 100px; flex: none; }
.grow { flex: 1; }

.fonts { display: flex; flex-direction: column; gap: 7px; padding: 7px 17px 11px; flex: none; }
.line { display: flex; gap: 7px; }
.swatch { width: 24px; height: 24px; border: 1px solid #333; border-radius: 3px; flex: none; }
.black { background: #000; width: 28px; }
.none { background: linear-gradient(135deg, #fff 47%, #f33 47% 53%, #fff 53%); }
.scroller { display: flex; flex: 1; min-height: 0; border-bottom: 2px solid #303030; }
.sections { flex: 1; overflow: hidden; }
.sections h2 { font-size: 14px; font-weight: 400; line-height: 22px; padding-bottom: 3px; background: #393939; padding-left: 7px; display: flex; align-items: center; gap: 11px; }
.deco { display: flex; gap: 4px; padding: 8px 17px 0; }
.triple { display: flex; gap: 1px; width: 103px; background: #303030; border: 1px solid #353535; border-radius: 3px; }
.triple.last { margin-left: 8px; }
.triple button { flex: 1; background: #454545; font: 15px/18px "Liberation Sans", sans-serif; height: 22px; padding-bottom: 2px; }
.triple button.on { background: #262626; }
.under { text-decoration: underline; text-underline-offset: 3px; }
.under2 { text-decoration: underline double; text-underline-offset: 2px; }
.strike { text-decoration: line-through; }
.strike2 { text-decoration: line-through double; }
.outline { display: flex; align-items: center; gap: 12px; padding: 13px 17px 9px; }
.stroke-box { width: 200px; height: 28px; gap: 5px; font-size: 14px; border: 1px solid #353535; border-bottom-color: #4c4c4c; border-radius: 3px; }
.position { display: flex; align-items: center; padding: 7px 0 0 17px; }
.position .combo { margin-left: 4px; height: 25px; }
.position i { width: 19px; }
.tracking { width: 19px; font-size: 12px; line-height: 16px; border-bottom: 1px solid #ccc; }
.spin { width: 12px; height: 22px; margin-left: 3px; border: 1px solid #2c2c2c; border-radius: 4px; background: #383838; flex-direction: column; gap: 5px; }
.spin::before, .spin::after { content: ""; border: 4px solid transparent; }
.spin::before { border-top: 0; border-bottom: 5px solid #ddd; }
.spin::after { border-bottom: 0; border-top: 5px solid #ddd; }
.shear { width: 51px; padding-left: 10px; text-align: center; font: italic 17px/22px "Liberation Serif", serif; }
.deg { width: 81px; }
.far { margin-left: 9px; }
.position.next { padding-top: 5px; }
.character .vbar { width: 21px; padding: 7px 0; }
.character .vbar .rail { padding-top: 6px; }
.bar-char { height: 51px; }

/* navigator */
.zoom-row { display: flex; align-items: center; height: 36px; padding: 0 12px; border-bottom: 1px solid #2b2b2b; flex: none; }
.zoom-row label { width: 44px; }
.zoom-slide { flex: 1; min-width: 0; margin: 0 0 0 5px; display: flex; flex-direction: column; gap: 1px; overflow: hidden; }
.zoom-slide input { appearance: none; width: 100%; height: 14px; margin: 0; background: linear-gradient(#5f8fd0, #5f8fd0) 2px 5px / 14px 5px no-repeat, linear-gradient(#303030 50%, #555 50%) 0 5px / 100% 3px no-repeat; }
.zoom-slide input::-webkit-slider-thumb { appearance: none; width: 12px; height: 13px; background: linear-gradient(#ddd, #aaa); clip-path: polygon(0 0, 100% 0, 100% 65%, 50% 100%, 0 65%); }
.zoom-field { width: 62px; margin-right: 5px; }
.preview { flex: 1; display: flex; justify-content: center; padding: 7px 0 0; }
.preview-page { width: 202px; height: 202px; background: #fff; border: 1px solid #999; }

/* status */
.status { display: flex; align-items: center; padding: 4px 9px 0; }
.status button + button { margin-left: 10px; }
.status .count { margin: 0 11px 0 24px; width: 65px; }
.status .bell { margin: 0 15px 0 19px; }
.status p { color: #aaa; }
.status b { color: #eee; }
.taskbar { background: #4a151c; }
.taskbar i { display: block; width: 61px; height: 2px; margin-left: 496px; background: #a4182a; }
```
